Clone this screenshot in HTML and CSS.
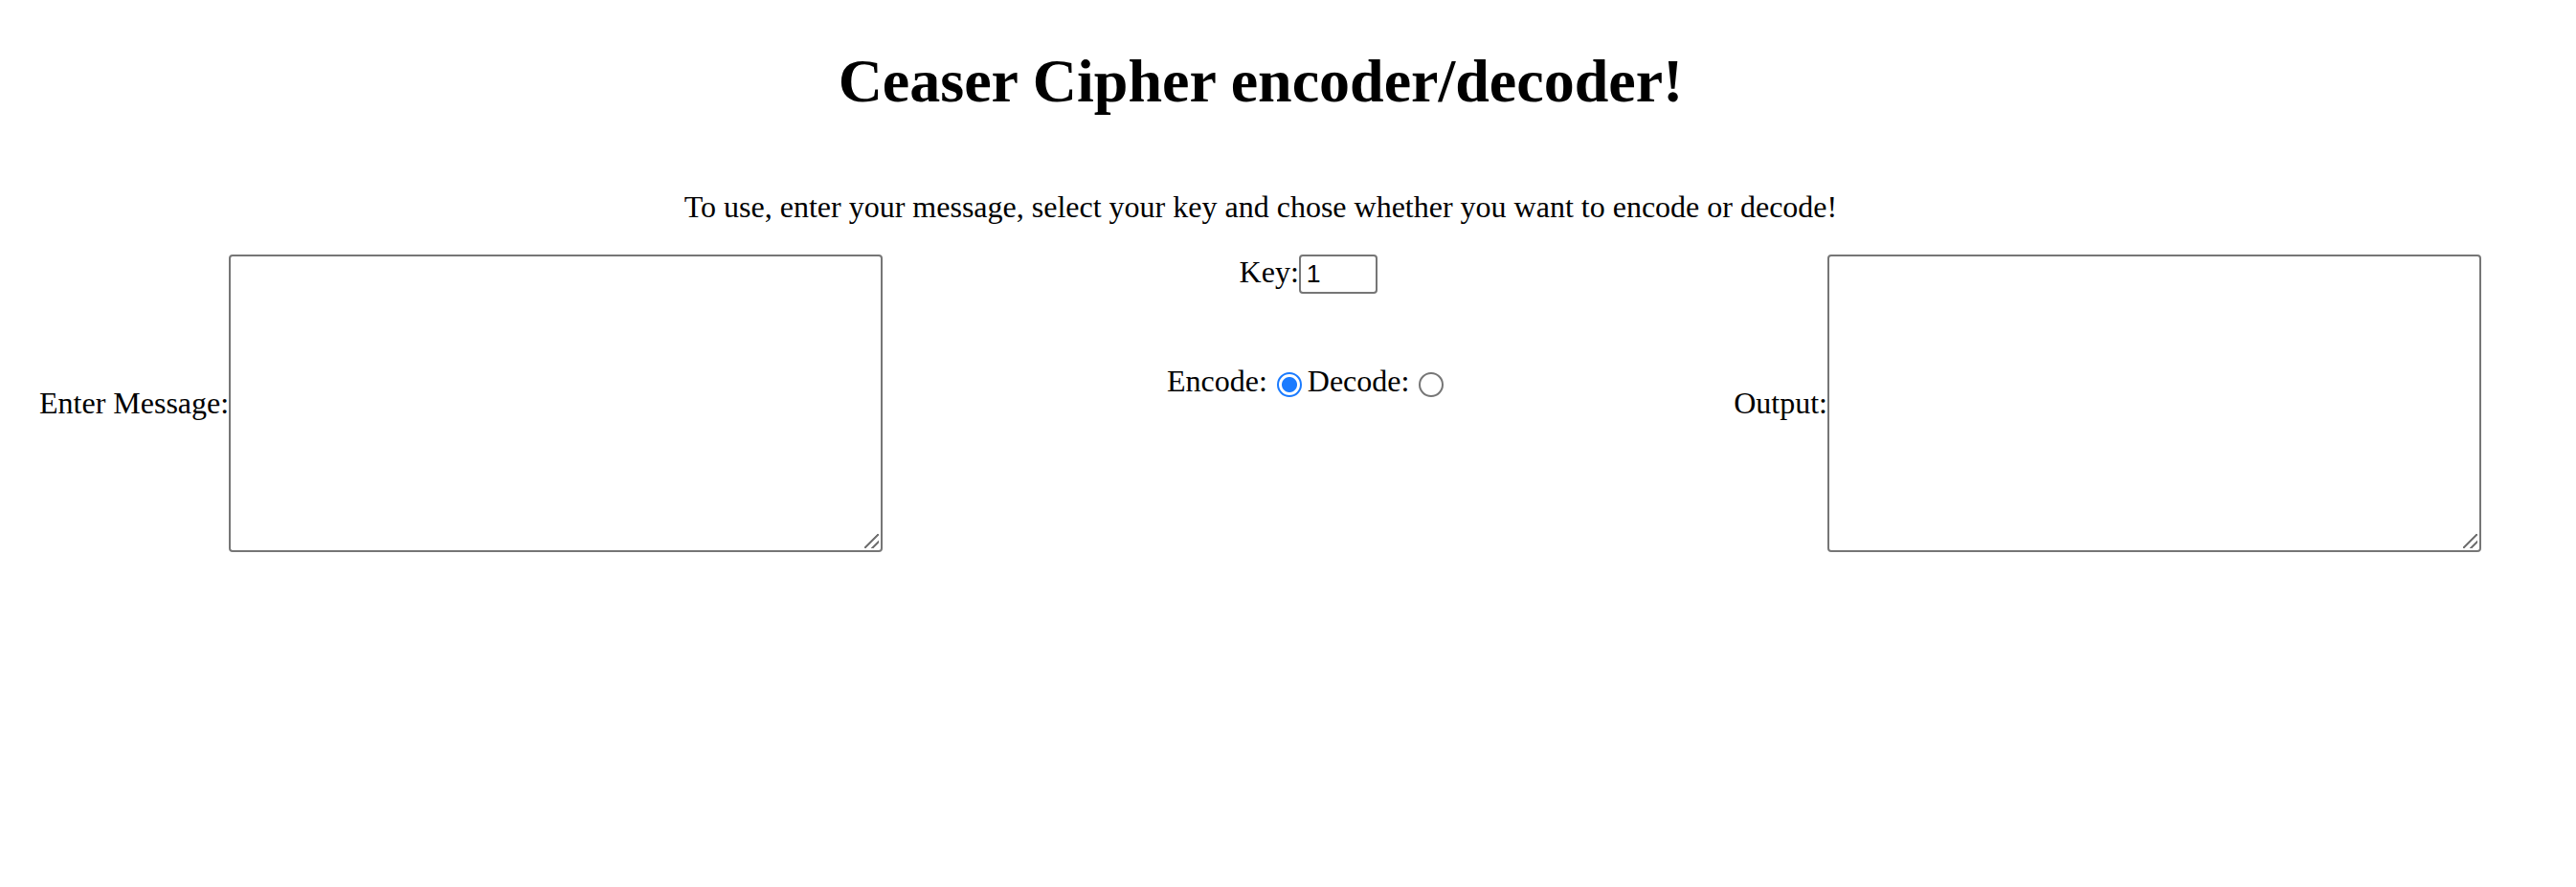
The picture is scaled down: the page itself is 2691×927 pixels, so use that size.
FILE: index.html
```html
<!DOCTYPE html>
<html lang="en">
<head>
<meta charset="utf-8">
<title>Ceaser Cipher encoder/decoder!</title>
<link rel="stylesheet" href="styles.css">
</head>
<body>
<main class="page">
  <h1 class="title">Ceaser Cipher encoder/decoder!</h1>
  <p class="intro">To use, enter your message, select your key and chose whether you want to encode or decode!</p>
  <div class="row">
    <div class="field">
      <label class="label" for="message">Enter Message:</label>
      <textarea class="box" id="message"></textarea>
    </div>
    <div class="controls">
      <div class="key-line">
        <label class="label" for="key">Key:</label><input class="key" id="key" type="text" inputmode="numeric" value="1">
      </div>
      <div class="mode-line">
        <label class="label" for="encode">Encode:</label><input class="radio" type="radio" name="mode" id="encode" checked><label class="label" for="decode">Decode:</label><input class="radio" type="radio" name="mode" id="decode">
      </div>
    </div>
    <div class="field">
      <label class="label" for="output">Output:</label>
      <textarea class="box" id="output"></textarea>
    </div>
  </div>
</main>
</body>
</html>
```
FILE: styles.css
```css
html, body {
  margin: 0;
  padding: 0;
  background: #ffffff;
}

body {
  font-family: "Liberation Serif", "Times New Roman", serif;
  font-size: 32px;
  color: #000000;
}

.page {
  width: 2602px;
  margin-left: 16px;
}

.title {
  margin: 48px 0 0;
  font-size: 64px;
  line-height: 74px;
  font-weight: bold;
  text-align: center;
}

.intro {
  margin: 76px 0 31px;
  line-height: 37px;
  text-align: center;
}

.row {
  display: flex;
  justify-content: space-between;
  align-items: flex-start;
  padding: 0 26px 0 25px;
}

.field {
  display: flex;
  align-items: center;
}

.label {
  line-height: 37px;
  white-space: nowrap;
}

.box {
  box-sizing: border-box;
  width: 683px;
  height: 311px;
  margin: 0;
  padding: 4px;
  border: 2px solid #767676;
  border-radius: 4px;
  resize: none;
  font-family: "Liberation Mono", monospace;
  font-size: 26px;
  background-color: #ffffff;
  background-image: linear-gradient(135deg, transparent 0 46%, #767676 46% 56%, transparent 56% 72%, #767676 72% 82%, transparent 82%);
  background-repeat: no-repeat;
  background-size: 15px 15px;
  background-position: right 2px bottom 2px;
}

.controls {
  display: flex;
  flex-direction: column;
  align-items: center;
}

.key-line {
  line-height: 37px;
  white-space: nowrap;
}

.key {
  box-sizing: border-box;
  width: 82px;
  height: 41px;
  margin: 0;
  padding: 0 6px;
  border: 2px solid #767676;
  border-radius: 4px;
  font-family: "Liberation Sans", Arial, sans-serif;
  font-size: 26.67px;
  color: #000000;
  background: #ffffff;
  vertical-align: baseline;
}

.mode-line {
  display: flex;
  align-items: flex-end;
  margin-top: 73px;
}

.radio {
  -webkit-appearance: none;
  appearance: none;
  box-sizing: border-box;
  width: 26px;
  height: 26px;
  margin: 0 6px 2px 10px;
  border: 2px solid #767676;
  border-radius: 50%;
  background: #ffffff;
  flex: none;
}

.radio:checked {
  border-color: #1a7bff;
  background: radial-gradient(circle, #1a7bff 0 7.5px, #ffffff 8.5px);
}
```
